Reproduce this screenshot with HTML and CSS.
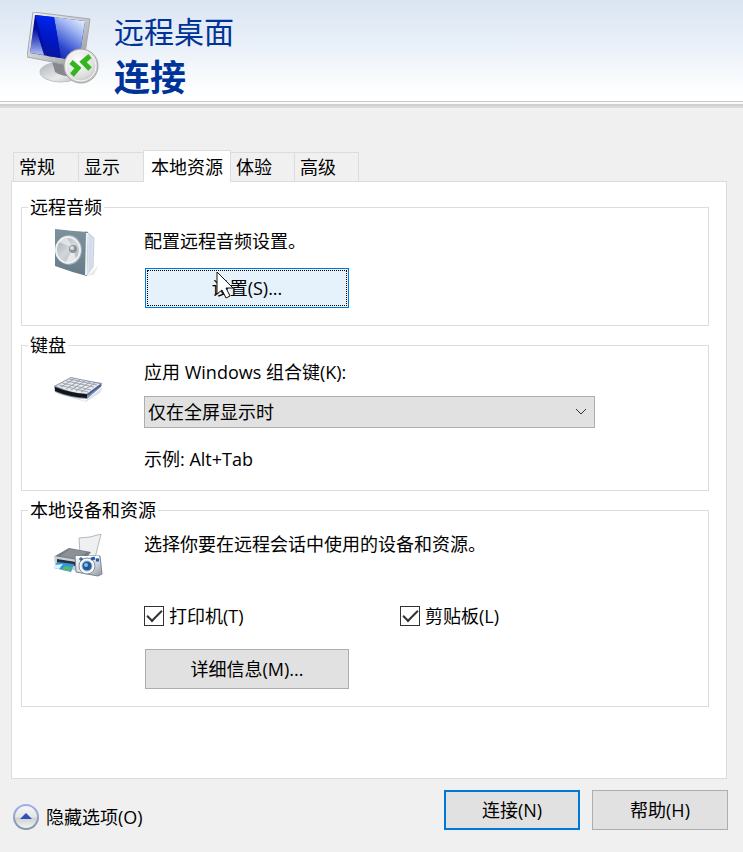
FILE: index.html
```html
<!DOCTYPE html>
<html lang="zh-CN">
<head>
  <meta charset="UTF-8">
  <title>远程桌面连接</title>
  <meta name="viewport" content="width=device-width, initial-scale=1.0">
  <link rel="stylesheet" href="styles.css">
</head>
<body>

  <!-- Banner -->
  <header class="banner">
    <svg class="logo" width="74" height="76" viewBox="0 0 74 76" aria-hidden="true">
      <defs>
        <linearGradient id="frame" x1="0" y1="0" x2="1" y2="1">
          <stop offset="0" stop-color="#f4f4f4"/><stop offset="0.5" stop-color="#c9cbcd"/><stop offset="1" stop-color="#8d9094"/>
        </linearGradient>
        <linearGradient id="screen" x1="0" y1="0" x2="0.3" y2="1">
          <stop offset="0" stop-color="#000c98"/><stop offset="0.6" stop-color="#0010a8"/><stop offset="1" stop-color="#1020a0"/>
        </linearGradient>
        <linearGradient id="glare" x1="0.9" y1="0" x2="0.4" y2="1">
          <stop offset="0" stop-color="#f0f6ff"/><stop offset="0.35" stop-color="#9db2f2"/><stop offset="0.8" stop-color="#2c48cc"/><stop offset="1" stop-color="#1a30b8"/>
        </linearGradient>
        <linearGradient id="ray" x1="0.6" y1="0" x2="0.4" y2="1">
          <stop offset="0" stop-color="#0028f0"/><stop offset="0.5" stop-color="#0018c8"/><stop offset="1" stop-color="#0a1494"/>
        </linearGradient>
        <linearGradient id="sheen" x1="0.2" y1="0" x2="0.2" y2="1">
          <stop offset="0.2" stop-color="#8ea2e8" stop-opacity="0"/><stop offset="1" stop-color="#b4c2f4"/>
        </linearGradient>
        <linearGradient id="stand" x1="0" y1="0" x2="1" y2="1">
          <stop offset="0" stop-color="#aeb1b4"/><stop offset="0.6" stop-color="#e8e9ea"/><stop offset="1" stop-color="#b8babc"/>
        </linearGradient>
        <radialGradient id="badge" cx="0.4" cy="0.35" r="0.7">
          <stop offset="0" stop-color="#ffffff"/><stop offset="0.7" stop-color="#dddddd"/><stop offset="1" stop-color="#bdbdbd"/>
        </radialGradient>
      </defs>
      <ellipse cx="34" cy="60" rx="21" ry="10" fill="url(#stand)" stroke="#bfc2c5"/>
      <path d="M25 49L48 54L46 64Q35 65 28 60Z" fill="#85898d"/>
      <path d="M6 0L63 7L56 56L0 45Z" fill="url(#frame)" stroke="#a6a9ac"/>
      <path d="M8 3L58 9L52 49L3 41Z" fill="url(#screen)"/>
      <path d="M27 5L58 9L52 49L34 46Z" fill="url(#glare)"/>
      <path d="M8 3L27 5L34 46L20 44Z" fill="url(#ray)"/>
      <path d="M7 10L17 43L3 41Z" fill="url(#sheen)"/>
      <circle cx="54" cy="54" r="17" fill="url(#badge)" stroke="#a3a3a3"/>
      <circle cx="54" cy="54" r="15" fill="none" stroke="#f6f6f6"/>
      <path d="M44 50L51 56L45 63M63 44L56 50L63 57" fill="none" stroke="#35b51d" stroke-width="5"/>
    </svg>
    <h1 class="banner-title">
      <span class="product">远程桌面</span>
      <span class="action">连接</span>
    </h1>
  </header>

  <form class="dialog">

    <!-- Tabs -->
    <div class="tabs" role="tablist">
      <button type="button" class="tab" role="tab">常规</button>
      <button type="button" class="tab" role="tab">显示</button>
      <button type="button" class="tab active" role="tab" aria-selected="true">本地资源</button>
      <button type="button" class="tab" role="tab">体验</button>
      <button type="button" class="tab" role="tab">高级</button>
    </div>

    <div class="panel" role="tabpanel">

      <!-- Audio -->
      <fieldset class="group">
        <legend>远程音频</legend>
        <div class="group-body">
          <svg class="icon" width="50" height="50" viewBox="0 0 50 50" aria-hidden="true">
            <defs>
              <linearGradient id="box" x1="0" y1="0" x2="0" y2="1">
                <stop offset="0" stop-color="#7d919c"/><stop offset="0.5" stop-color="#748792"/><stop offset="1" stop-color="#657b87"/>
              </linearGradient>
              <linearGradient id="side" x1="0" y1="0" x2="1" y2="0">
                <stop offset="0" stop-color="#f2f6fa"/><stop offset="0.5" stop-color="#cddaea"/><stop offset="1" stop-color="#dfe8f1"/>
              </linearGradient>
              <linearGradient id="cone" x1="0" y1="0" x2="1" y2="1">
                <stop offset="0" stop-color="#a3abb1"/><stop offset="0.5" stop-color="#d3d7da"/><stop offset="1" stop-color="#a7afb5"/>
              </linearGradient>
            </defs>
            <path d="M33 47L45 36L40 46Z" fill="#ececec"/>
            <path d="M32 2L40 9L39 38L32 47Z" fill="url(#side)" stroke="#c2cedb"/>
            <path d="M1 0Q17 2 34 3L33 47Q17 43 1 37Z" fill="url(#box)"/>
            <path d="M33 4L32 46" stroke="#eef3f7" stroke-width="2"/>
            <ellipse cx="15" cy="21" rx="13" ry="15" fill="#9fadb6"/>
            <ellipse cx="14" cy="21" rx="12" ry="13" fill="url(#cone)" stroke="#edf1f4" stroke-width="2"/>
            <path d="M19 19L12 33Q18 34 22 30Z" fill="#fff" opacity="0.6"/>
            <path d="M19 19L5 13Q8 9 13 9Z" fill="#eef0f2" opacity="0.7"/>
            <circle cx="19" cy="20" r="4" fill="#8a949b"/>
            <circle cx="18" cy="19" r="2" fill="#dde1e4"/>
          </svg>
          <div class="fields">
            <p>配置远程音频设置。</p>
            <div class="button-wrap">
              <button type="button" class="btn wide focused">设置(S)...</button>
              <svg class="cursor" width="18" height="29" viewBox="0 0 18 29" aria-hidden="true">
                <path d="M1 1V23L6 19L10 27L14 25L10 17H17Z" fill="#fff" stroke="#111"/>
              </svg>
            </div>
          </div>
        </div>
      </fieldset>

      <!-- Keyboard -->
      <fieldset class="group">
        <legend>键盘</legend>
        <div class="group-body keyboard">
          <svg class="icon" width="50" height="26" viewBox="0 0 50 26" aria-hidden="true">
            <path d="M4 15L31 25L49 11L46 17L32 26L4 18Z" fill="#dfe2e8"/>
            <path d="M0 10L17 1Q30 4 48 7L47 11L33 23Q16 22 1 16Z" fill="#8793aa"/>
            <path d="M2 10L17 2Q31 5 46 8L33 18Q17 17 2 10Z" fill="#e7e9ed"/>
            <path d="M1 11Q16 17 33 18V22Q15 21 1 15Z" fill="#11151c"/>
            <path d="M33 19L47 9" stroke="#455f98" stroke-width="2"/>
            <path d="M5 9L34 16M8 7L37 14M12 5L40 11M15 3L43 9" stroke="#a2a8b1"/>
            <path d="M7 11L20 3M12 13L26 4M17 14L31 5M22 15L36 6M27 16L41 7" stroke="#959da9"/>
          </svg>
          <div class="fields">
            <label for="keys">应用 Windows 组合键(K):</label>
            <div class="select-wrap">
              <select id="keys">
                <option>仅在全屏显示时</option>
              </select>
              <svg class="chevron" width="12" height="8" viewBox="0 0 12 8" aria-hidden="true">
                <path d="M1 1L6 6L11 1" fill="none" stroke="#333"/>
              </svg>
            </div>
            <p class="example">示例: Alt+Tab</p>
          </div>
        </div>
      </fieldset>

      <!-- Local devices -->
      <fieldset class="group">
        <legend>本地设备和资源</legend>
        <div class="group-body devices">
          <svg class="icon" width="50" height="44" viewBox="0 0 50 44" aria-hidden="true">
            <defs>
              <linearGradient id="metal" x1="0" y1="0" x2="1" y2="1">
                <stop offset="0" stop-color="#f5f7fa"/><stop offset="0.6" stop-color="#cfd5dc"/><stop offset="1" stop-color="#8a949f"/>
              </linearGradient>
            </defs>
            <path d="M25 4Q36 4 47 0L41 24L26 20Z" fill="#eef0f1" stroke="#b5b8ba"/>
            <path d="M1 22L15 14L37 18L27 31L2 27Z" fill="#747b83"/>
            <path d="M6 22L16 15L33 18L24 25Z" fill="#8b9197"/>
            <path d="M0 22L24 26V37L1 32Z" fill="#cad0d7"/>
            <path d="M3 25L22 28V32L3 29Z" fill="#24303c"/>
            <path d="M3 28L20 30L17 38L0 34Z" fill="#3596dc"/>
            <path d="M1 31L9 30L5 35L0 34Z" fill="#ddf4fb"/>
            <path d="M11 32L18 33L16 37L8 36Z" fill="#55b775"/>
            <path d="M21 22L46 22L48 40L44 42L22 38Z" fill="url(#metal)" stroke="#7b8590"/>
            <path d="M22 23L45 23" stroke="#fff" stroke-width="2"/>
            <circle cx="33" cy="32" r="8" fill="#f8fafc" stroke="#858f9a"/>
            <circle cx="33" cy="32" r="5" fill="#265791" stroke="#96b8dd"/>
            <circle cx="32" cy="31" r="2" fill="#7cbdf3"/>
            <path d="M37 25L41 24M42 26H45" stroke="#235ab0" stroke-width="3"/>
            <path d="M25 25H29M27 23V27" stroke="#203e70"/>
          </svg>
          <div class="fields">
            <p>选择你要在远程会话中使用的设备和资源。</p>
            <div class="checks">
              <label class="check"><input type="checkbox" checked>打印机(T)</label>
              <label class="check"><input type="checkbox" checked>剪贴板(L)</label>
            </div>
            <div class="button-wrap">
              <button type="button" class="btn wide">详细信息(M)...</button>
            </div>
          </div>
        </div>
      </fieldset>

    </div>

    <!-- Footer -->
    <div class="footer">
      <button type="button" class="toggle">
        <svg width="26" height="26" viewBox="0 0 26 26" aria-hidden="true">
          <defs>
            <linearGradient id="knob" x1="0" y1="0" x2="0" y2="1">
              <stop offset="0" stop-color="#f7f8f8"/><stop offset="0.5" stop-color="#e3e6e4"/><stop offset="0.55" stop-color="#cdd2cf"/><stop offset="1" stop-color="#f4f7f5"/>
            </linearGradient>
            <linearGradient id="ring" x1="0" y1="0" x2="0" y2="1">
              <stop offset="0" stop-color="#a3acec"/><stop offset="1" stop-color="#8694ab"/>
            </linearGradient>
          </defs>
          <circle cx="13" cy="13" r="12" fill="url(#knob)" stroke="url(#ring)" stroke-width="2"/>
          <path d="M7 15L13 9L19 15Z" fill="#2f4fc0"/>
        </svg>
        隐藏选项(O)
      </button>
      <div class="actions">
        <button type="submit" class="btn default">连接(N)</button>
        <button type="button" class="btn">帮助(H)</button>
      </div>
    </div>

  </form>
</body>
</html>
```

FILE: styles.css
```css
* { box-sizing: border-box; }

body {
  margin: 0;
  min-height: 100vh;
  display: flex;
  flex-direction: column;
  background: #f0f0f0;
  color: #000;
  font-family: "Open Sans", "Noto Sans CJK SC", sans-serif;
  font-size: 18px;
  line-height: 24px;
}

p { margin: 0; }

button, select, input {
  font: inherit;
  color: inherit;
}

/* Banner */
.banner {
  display: flex;
  align-items: flex-start;
  gap: 13px;
  padding: 12px 27px 1px;
  background: linear-gradient(#dae5f3, #e9f0f8 45%, #fcfdfe 85%, #fff);
  border-bottom: 1px solid #c8c8c8;
  box-shadow: 0 2px 0 #fafafa, 0 4px 0 #d0d0d0, 0 6px 0 #dadada;
}

.logo { flex: none; }

.banner-title {
  display: flex;
  flex-direction: column;
  gap: 3px;
  margin: 0;
  color: #003399;
  font-family: "Liberation Sans", "Noto Sans CJK SC", sans-serif;
}

.product {
  font-size: 30px;
  font-weight: 400;
  line-height: 42px;
}

.action {
  font-size: 36px;
  font-weight: 700;
  line-height: 43px;
}

/* Tabs */
.dialog {
  flex: 1;
  display: flex;
  flex-direction: column;
  padding: 48px 16px 22px 11px;
}

.tabs {
  display: flex;
  align-items: flex-end;
  padding-left: 2px;
}

.tab {
  width: 65px;
  height: 29px;
  padding: 0 5px;
  background: #f0f0f0;
  border: 1px solid #dcdcdc;
  border-width: 1px 1px 0 0;
  text-align: left;
  line-height: 24px;
}

.tab:first-child {
  width: 66px;
  border-left-width: 1px;
}

.tab.active {
  width: 88px;
  height: 32px;
  margin: 0 0 -1px -1px;
  padding: 0 7px;
  background: #fff;
  border-left-width: 1px;
  z-index: 1;
}

.tab.active ~ .tab { width: 64px; }

.panel {
  flex: 1;
  display: flex;
  flex-direction: column;
  gap: 7px;
  padding: 13px 17px 14px 9px;
  background: #fff;
  border: 1px solid #dcdcdc;
}

/* Groups */
.group {
  min-width: 0;
  margin: 0;
  padding: 0 16px 17px 32px;
  border: 1px solid #dcdcdc;
}

.group legend {
  margin-left: -26px;
  padding: 0 2px;
}

.group-body {
  display: flex;
  align-items: flex-start;
  gap: 40px;
  padding-top: 10px;
}

.group-body.keyboard { padding: 3px 0 2px; }

.icon {
  flex: none;
  width: 50px;
}

.keyboard .icon { margin-top: 16px; }

.devices .icon { margin-top: 2px; }

.fields {
  flex: 1;
  min-width: 0;
}

.button-wrap {
  position: relative;
  margin: 15px 0 0 1px;
}

/* Buttons */
.btn {
  width: 136px;
  height: 40px;
  padding: 0;
  background: #e1e1e1;
  border: 1px solid #adadad;
}

.btn:hover { background: #e5f1fb; }

.btn.wide { width: 204px; }

.btn.default { border: 2px solid #0078d7; }

.btn.focused {
  background: #e5f1fb;
  border-color: #0078d7;
  outline: 1px dotted #000;
  outline-offset: -3px;
}

.cursor {
  position: absolute;
  left: 71px;
  top: 3px;
  pointer-events: none;
}

/* Drop-down */
.keyboard label { display: block; }

.select-wrap {
  position: relative;
  max-width: 451px;
  margin: 12px 0 19px;
}

select {
  display: block;
  width: 100%;
  height: 32px;
  padding: 0 30px 0 3px;
  appearance: none;
  background: #e1e1e1;
  border: 1px solid #adadad;
  border-radius: 0;
}

.chevron {
  position: absolute;
  right: 8px;
  top: 12px;
  pointer-events: none;
}

/* Check boxes */
.checks {
  display: grid;
  grid-template-columns: 256px 1fr;
  margin: 48px 0 21px;
}

.check {
  display: flex;
  align-items: center;
  gap: 5px;
}

.check input {
  display: grid;
  place-items: center;
  width: 20px;
  height: 20px;
  margin: 0;
  appearance: none;
  background: #fff;
  border: 1px solid #333;
}

.check input:checked::before {
  content: "";
  width: 13px;
  height: 6px;
  margin-bottom: 4px;
  border: solid #333;
  border-width: 0 0 2px 2px;
  transform: rotate(-45deg);
}

/* Footer */
.footer {
  display: flex;
  justify-content: space-between;
  padding-top: 11px;
  margin-right: -1px;
}

.toggle {
  display: flex;
  align-items: center;
  align-self: flex-end;
  gap: 7px;
  padding: 0 2px;
  background: none;
  border: none;
}

.actions {
  display: flex;
  gap: 12px;
}
```
